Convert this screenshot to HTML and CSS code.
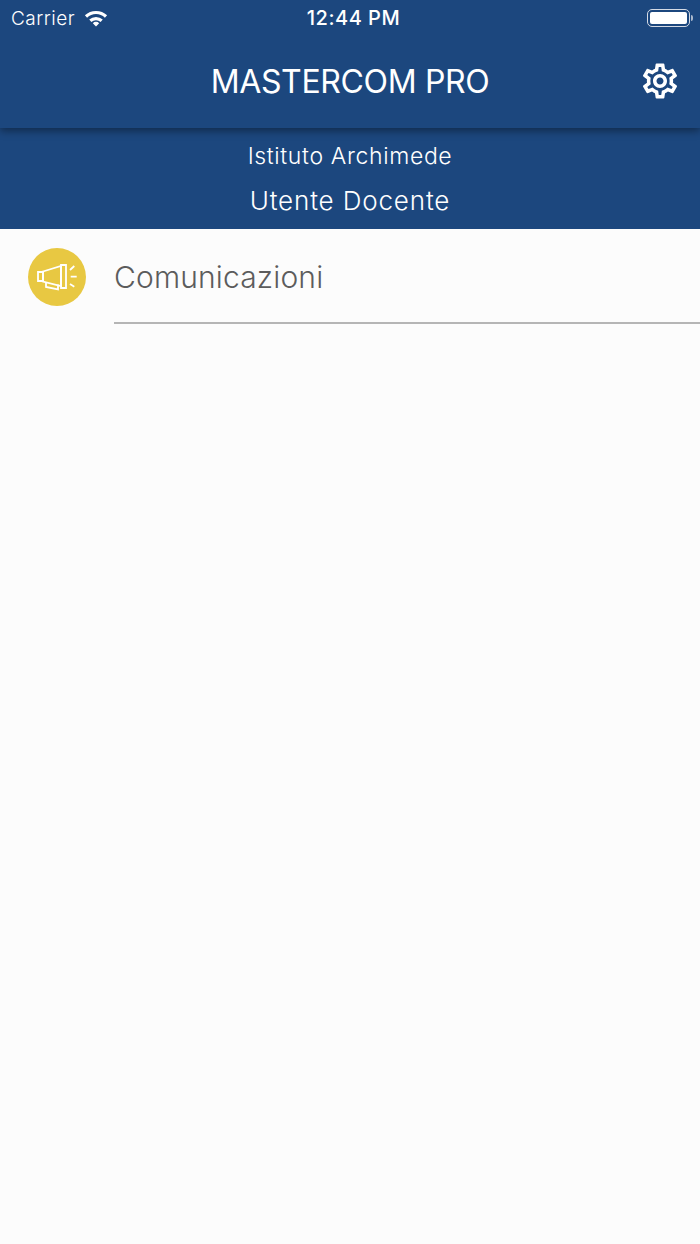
FILE: index.html
```html
<!DOCTYPE html>
<html>

<head>
    <meta charset="utf-8" />
    <title>Mastercom Pro</title>
    <link rel="stylesheet" href="styles.css">
</head>

<body>
    <div class="header">
        <div class="status-bar">
            <div class="status-left">
                <span class="carrier">Carrier</span>
                <svg class="wifi" width="24" height="17" viewBox="0 0 24 17">
                    <path d="M12 16.500l-3.200-3.300a4.500 4.500 0 0 1 6.400 0z" fill="#fff" />
                    <path d="M2 6.500a14.500 14.500 0 0 1 20 0" fill="none" stroke="#fff" stroke-width="3.200" />
                    <path d="M6.300 10.800a8.500 8.500 0 0 1 11.400 0" fill="none" stroke="#fff" stroke-width="3.200" />
                </svg>
            </div>
            <span class="clock">12:44 PM</span>
            <div class="status-right">
                <div class="battery"><div class="battery-level"></div></div>
                <div class="battery-tip"></div>
            </div>
        </div>
        <div class="title-row">
            <h1 class="title">MASTERCOM PRO</h1>
            <svg class="settings" width="42" height="42" viewBox="0 0 24 24">
                <path fill="#fff" d="M19.43 12.98c.04-.32.07-.64.07-.98 0-.34-.03-.66-.07-.98l2.11-1.650c.19-.15.24-.42.12-.64l-2-3.460c-.09-.16-.26-.25-.44-.25-.06 0-.12.01-.17.03l-2.490 1c-.52-.4-1.080-.73-1.690-.98l-.38-2.650C14.460 2.180 14.250 2 14 2h-4c-.25 0-.46.18-.49.42l-.38 2.650c-.61.25-1.170.59-1.690.98l-2.490-1c-.06-.02-.12-.03-.18-.03-.17 0-.34.09-.43.25l-2 3.460c-.13.22-.07.49.12.64l2.110 1.650c-.04.32-.07.65-.07.98 0 .33.03.66.07.98l-2.110 1.650c-.19.15-.24.42-.12.64l2 3.460c.09.16.26.25.44.25.06 0 .12-.01.17-.03l2.490-1c.52.4 1.080.73 1.690.98l.38 2.650c.03.24.24.42.49.42h4c.25 0 .46-.18.49-.42l.38-2.650c.61-.25 1.170-.59 1.690-.98l2.490 1c.06.02.12.03.18.03.17 0 .34-.09.43-.25l2-3.460c.12-.22.07-.49-.12-.64l-2.110-1.650zm-1.980-1.710c.04.31.05.52.05.73 0 .21-.02.43-.05.73l-.14 1.130.89.7 1.080.84-.7 1.210-1.270-.51-1.040-.42-.9.68c-.43.32-.84.56-1.250.73l-1.060.43-.16 1.130-.2 1.350h-1.400l-.19-1.350-.16-1.130-1.060-.43c-.43-.18-.83-.41-1.230-.71l-.91-.7-1.060.43-1.270.51-.7-1.210 1.080-.84.89-.7-.14-1.130c-.03-.31-.05-.54-.05-.74s.02-.43.05-.73l.14-1.130-.89-.7-1.080-.84.7-1.210 1.270.51 1.040.42.9-.68c.43-.32.84-.56 1.250-.73l1.060-.43.16-1.130.2-1.350h1.390l.19 1.350.16 1.130 1.060.43c.43.18.83.41 1.230.71l.91.7 1.060-.43 1.270-.51.7 1.210-1.070.85-.89.7.14 1.130zM12 8c-2.210 0-4 1.790-4 4s1.790 4 4 4 4-1.790 4-4-1.790-4-4-4zm0 6c-1.100 0-2-.9-2-2s.9-2 2-2 2 .9 2 2-.9 2-2 2z" />
            </svg>
        </div>
    </div>

    <div class="school-info">
        <div class="school-name">Istituto Archimede</div>
        <div class="user-name">Utente Docente</div>
    </div>

    <div class="menu">
        <div class="menu-item">
            <div class="menu-icon">
                <svg width="42" height="30" viewBox="0 0 42 30" fill="none" stroke="#fff" stroke-width="1.800">
                    <path d="M2 10h5v9h-5z" />
                    <path d="M7 9.500l18-5.500v20l-18-4.500z" />
                    <path d="M25 3h5v23h-5z" />
                    <path d="M10 20.500v4.500l12 2.500v-5" />
                    <path d="M34 8l4.300-4M34.700 14.700h6M34 22l4.300 2.700" />
                </svg>
            </div>
            <div class="menu-label">Comunicazioni</div>
        </div>
    </div>
</body>

</html>
```

FILE: styles.css
```css
html {
    margin: 0px;
    padding: 0px;
    height: 100%;
}

body {
    font-family: 'Inter', 'Liberation Sans', sans-serif;
    margin: 0px;
    padding: 0px;
    min-height: 1244px;
    background-color: #fcfcfc;
    color: #fff;
}

.header {
    height: 128px;
    background-color: #1c477e;
    box-shadow: 0px 3px 8px rgba(0, 0, 0, 0.4);
    position: relative;
    z-index: 1;
}

.status-bar {
    height: 36px;
    padding: 0px 7px 0px 11px;
    display: flex;
    align-items: center;
    justify-content: space-between;
}

.status-left {
    display: flex;
    align-items: center;
    gap: 9px;
    width: 150px;
}

.carrier {
    font-size: 19px;
    font-weight: 300;
    letter-spacing: 0.5px;
}

.clock {
    font-size: 20px;
    font-weight: 500;
    letter-spacing: 0.5px;
    margin-left: 3px;
}

.status-right {
    display: flex;
    align-items: center;
    justify-content: flex-end;
    width: 150px;
    gap: 1px;
}

.battery {
    width: 43px;
    height: 18px;
    box-sizing: border-box;
    padding: 2px;
    border: 1.500px solid #d5dbe5;
    border-radius: 5px;
}

.battery-level {
    height: 100%;
    background-color: #fff;
    border-radius: 2px;
}

.battery-tip {
    width: 2px;
    height: 6px;
    background-color: #aab8cc;
    border-radius: 0px 2px 2px 0px;
}

.title-row {
    height: 90px;
    display: flex;
    align-items: center;
    justify-content: center;
    position: relative;
}

.title {
    margin: 0px;
    font-size: 32px;
    font-weight: 400;
    letter-spacing: -0.35px;
}

.settings {
    position: absolute;
    right: 19px;
    top: 24px;
}

.school-info {
    height: 101px;
    background-color: #1c477e;
    text-align: center;
}

.school-name {
    padding-top: 14px;
    font-size: 23px;
    font-weight: 300;
    line-height: 28px;
    letter-spacing: 0.65px;
}

.user-name {
    padding-top: 15px;
    font-size: 26px;
    font-weight: 300;
    line-height: 32px;
    letter-spacing: 0.85px;
}

.menu-item {
    display: flex;
    padding-left: 28px;
}

.menu-icon {
    width: 58px;
    height: 58px;
    margin-top: 19px;
    border-radius: 50%;
    background-color: #e8c842;
    display: flex;
    align-items: center;
    justify-content: center;
    flex-shrink: 0;
}

.menu-label {
    flex: 1;
    margin-left: 28px;
    height: 93px;
    border-bottom: 2px solid #b5b5b5;
    color: #5c5c5c;
    font-size: 30px;
    font-weight: 300;
    line-height: 96px;
    letter-spacing: 0.15px;
}
```
